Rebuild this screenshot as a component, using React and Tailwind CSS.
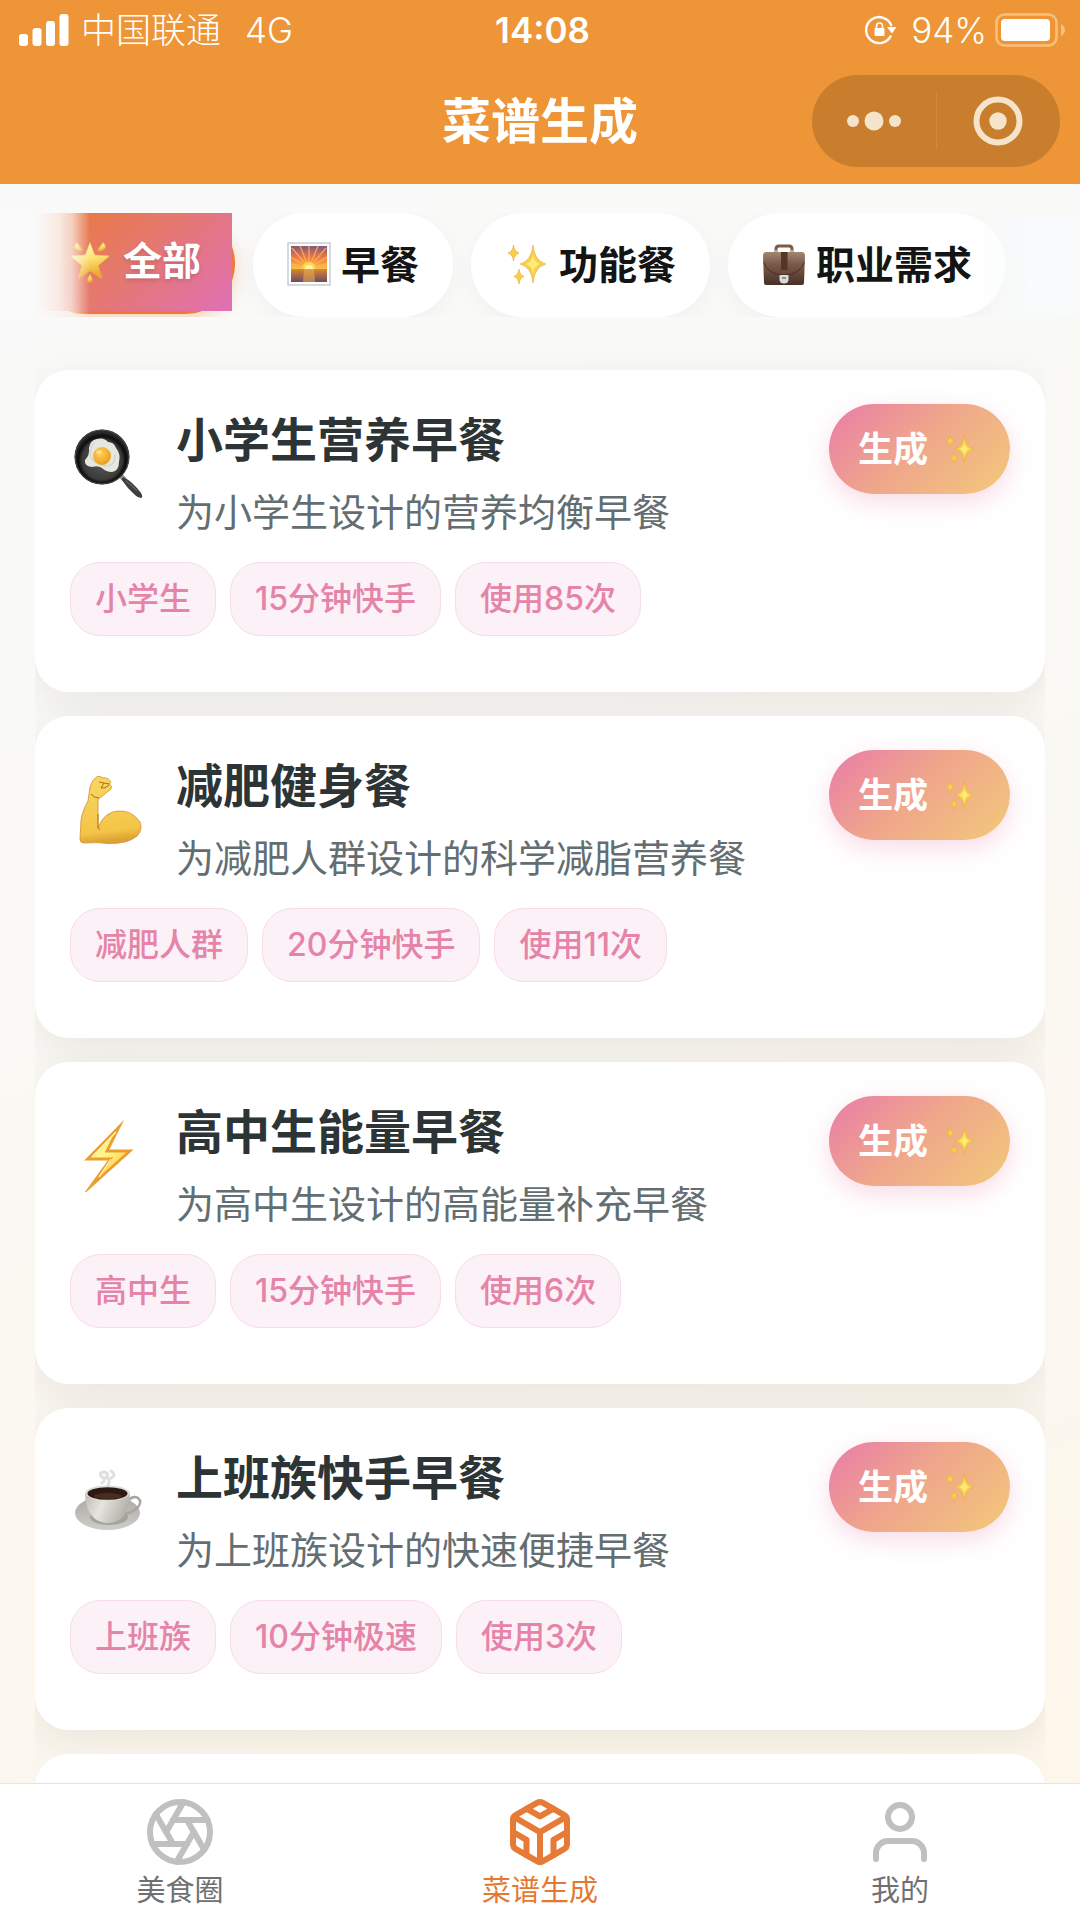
import { useState } from "react";
import clsx from "clsx";
import { FiAperture, FiCodesandbox, FiUser } from "react-icons/fi";

/* ---------- emoji drawings ---------- */

function StarIcon({ className }) {
  return (
    <svg viewBox="0 0 44 44" className={className} aria-hidden="true">
      <defs>
        <linearGradient id="star" x1="0" y1="0" x2="0.2" y2="1">
          <stop offset="0" stopColor="#fffbd0" />
          <stop offset="0.5" stopColor="#fbe578" />
          <stop offset="1" stopColor="#eda72e" />
        </linearGradient>
      </defs>
      <g fill="url(#star)" stroke="#e9a63a" strokeWidth="0.5" strokeLinejoin="round">
        <path d="M21 3 L25.6 15.3 Q26 16 27 16 L39.4 16.6 Q40.6 17 39.6 18 L30 26 Q29.4 26.6 29.6 27.4 L33 38.4 Q33 40 31.6 39.2 L21.8 32.6 Q21 32.2 20.2 32.6 L10.4 39.2 Q9 40 9 38.4 L12.4 27.4 Q12.6 26.6 12 26 L2.4 18 Q1.4 17 2.6 16.6 L15 16 Q16 16 16.4 15.3 Z" />
        <path d="M8 3.5 L13.5 11 Q11 13 9 12 L5.5 9 Q5 6 8 3.5 Z" />
        <path d="M34 3.5 L28.5 11 Q31 13 33 12 L36.5 9 Q37 6 34 3.5 Z" />
        <path d="M21 35 L23.6 41 Q23.5 43.5 21 43.5 Q18.5 43.5 18.4 41 Z" />
      </g>
    </svg>
  );
}

function SunriseIcon({ className }) {
  return (
    <svg viewBox="0 0 44 44" className={className} aria-hidden="true">
      <defs>
        <linearGradient id="sky" x1="0" y1="0" x2="0" y2="1">
          <stop offset="0" stopColor="#83567a" />
          <stop offset="0.5" stopColor="#ee7a42" />
          <stop offset="1" stopColor="#fbc23c" />
        </linearGradient>
        <linearGradient id="sea" x1="0" y1="0" x2="0" y2="1">
          <stop offset="0" stopColor="#d9872f" />
          <stop offset="1" stopColor="#6d4a64" />
        </linearGradient>
      </defs>
      <rect x="1" y="1" width="42" height="42" fill="#fff" stroke="#c5cad0" strokeWidth="1.4" />
      <rect x="4" y="4" width="36" height="23" fill="url(#sky)" />
      <g stroke="#ffb35c" strokeWidth="1.3" opacity="0.85">
        <path d="M22 26 L5 6 M22 26 L13 4 M22 26 L22 4 M22 26 L31 4 M22 26 L39 6 M22 26 L4 15 M22 26 L40 15 M22 26 L4 22 M22 26 L40 22" />
      </g>
      <path d="M15 27 a7 7 0 0 1 14 0 Z" fill="#ffd84a" />
      <path d="M18 27 a4 4 0 0 1 8 0 Z" fill="#fff7b0" />
      <rect x="4" y="27" width="36" height="13" fill="url(#sea)" />
      <path d="M17 27 H27 L28 40 H16 Z" fill="#f0b04c" opacity="0.55" />
    </svg>
  );
}

function SparklesIcon({ className }) {
  return (
    <svg viewBox="0 0 44 44" className={className} aria-hidden="true">
      <g fill="#f6cf4b" stroke="#eba53c" strokeWidth="0.6" strokeLinejoin="round">
        <path d="M28 3 Q29.500 19 41 22 Q29.500 25 28 41 Q26.500 25 15 22 Q26.500 19 28 3 Z" />
        <path d="M8.500 3 Q9.300 9.500 14 11 Q9.300 12.500 8.500 19 Q7.700 12.500 3 11 Q7.700 9.500 8.500 3 Z" />
        <path d="M14 27 Q14.700 32.800 19 34.500 Q14.700 36.200 14 42 Q13.300 36.200 9 34.500 Q13.300 32.800 14 27 Z" />
      </g>
      <path d="M28 12 Q29 20 35 22 Q29 24 28 32 Q27 24 21 22 Q27 20 28 12 Z" fill="#fdea7a" />
    </svg>
  );
}

function BriefcaseIcon({ className }) {
  return (
    <svg viewBox="0 0 44 44" className={className} aria-hidden="true">
      <defs>
        <linearGradient id="leather" x1="0" y1="0" x2="0" y2="1">
          <stop offset="0" stopColor="#a08872" />
          <stop offset="0.35" stopColor="#7b5d4a" />
          <stop offset="1" stopColor="#4a2f27" />
        </linearGradient>
      </defs>
      <path d="M14 11 V7 Q14 4 17 4 H27 Q30 4 30 7 V11" fill="none" stroke="#7d5a47" strokeWidth="3" />
      <path d="M14 8 V11 M30 8 V11" stroke="#cfd0cf" strokeWidth="1.500" />
      <path d="M4 10 H40 Q43 10 43 14 L42 41 Q42 43 40 43 H4 Q2 43 2 41 L1 14 Q1 10 4 10 Z" fill="url(#leather)" />
      <path d="M1.500 20 Q6 33 22 33 Q38 33 42.500 20" fill="none" stroke="#3e2720" strokeWidth="1" opacity="0.8" />
      <rect x="19" y="10" width="6.500" height="18" fill="#553527" />
      <path d="M17.500 33 H26.500 V38 Q26 41.500 22 41.500 Q18 41.500 17.500 38 Z" fill="#dadad8" />
      <rect x="20" y="35" width="4" height="2" fill="#8f8f8c" />
    </svg>
  );
}

function PanIcon() {
  return (
    <svg viewBox="0 0 72 72" className="size-[72px]" aria-hidden="true">
      <defs>
        <radialGradient id="pan" cx="0.5" cy="0.55" r="0.5">
          <stop offset="0" stopColor="#5b5b5b" />
          <stop offset="0.72" stopColor="#3c3c3c" />
          <stop offset="0.86" stopColor="#0c0c0c" />
          <stop offset="1" stopColor="#2b2b2b" />
        </radialGradient>
        <radialGradient id="yolk" cx="0.4" cy="0.35" r="0.7">
          <stop offset="0" stopColor="#ffd257" />
          <stop offset="1" stopColor="#ea9a1c" />
        </radialGradient>
      </defs>
      <path d="M48 47 L53 52" stroke="#9a9a9a" strokeWidth="5" />
      <path d="M51 49 Q60 53 69 65 Q71.500 69.500 69 70 Q66 70 63 67 Q55 60 49.500 51.500 Z" fill="#3f3f3f" />
      <path d="M54 53 Q60 57 65 63" stroke="#777" strokeWidth="1" fill="none" />
      <circle cx="30" cy="29" r="27.500" fill="url(#pan)" />
      <circle cx="30" cy="29" r="26.800" fill="none" stroke="#484848" strokeWidth="1" />
      <path d="M25 11 Q32 9 36 14 Q42 14 44 20 Q49 26 47 34 Q47 43 40 44 Q34 44 30 40 Q26 37 20 39 Q12 38 13 32 Q18 27 17 20 Q18 12 25 11 Z" fill="#e6e8e0" />
      <path d="M22 14 Q17 23 19 30 Q24 37 36 38 Q44 36 43 26" fill="none" stroke="#d3d6ca" strokeWidth="1.300" />
      <circle cx="30" cy="28" r="9" fill="url(#yolk)" />
      <ellipse cx="27" cy="24" rx="3" ry="2" fill="#fff0b8" opacity="0.5" />
    </svg>
  );
}

function ArmIcon() {
  return (
    <svg viewBox="0 0 72 72" className="size-[72px]" aria-hidden="true">
      <defs>
        <linearGradient id="skin" x1="0" y1="0" x2="0.1" y2="1">
          <stop offset="0" stopColor="#f9d765" />
          <stop offset="0.85" stopColor="#f3c547" />
          <stop offset="1" stopColor="#dda233" />
        </linearGradient>
      </defs>
      <path
        d="M18 13 Q20 6 25 2.500 Q28 1.500 31 4 Q34 3 37 5.500 L39 8 L37.500 10 Q40.500 12 39 15 Q34 19 28.500 23.500 Q26 24 26 27 L26 54 Q32 38 46 37 Q60 36 68 48 Q71 56 65 62 Q56 70 36 69.500 Q26 68 12 69 Q8 69 8 65 L9 46 Q10 38 16 27 Z"
        fill="url(#skin)"
        stroke="#d0902b"
        strokeWidth="0.800"
      />
      <path d="M26 40 V54 M26 54 L28 56" fill="none" stroke="#b5761d" strokeWidth="1" />
      <path d="M27 8 L32 9 L29 14 Q33 15 37 11 M32 9 L37.500 10 M19 20 Q22 24 27 24" fill="none" stroke="#a96d1c" strokeWidth="1" />
    </svg>
  );
}

function BoltIcon() {
  return (
    <svg viewBox="0 0 72 72" className="size-[72px]" aria-hidden="true">
      <defs>
        <linearGradient id="bolt" x1="0" y1="0" x2="0.6" y2="1">
          <stop offset="0" stopColor="#f7c93e" />
          <stop offset="0.5" stopColor="#fff78e" />
          <stop offset="1" stopColor="#f9bd36" />
        </linearGradient>
      </defs>
      <path
        d="M47 7 L15.500 39 H38.500 L19 66 L58 31 H35 Z"
        fill="url(#bolt)"
        stroke="#eb9d2d"
        strokeWidth="2.800"
        strokeMiterlimit="10"
      />
      <path d="M44 12 L20 37 M39 39 L27 57" stroke="#fffbc4" strokeWidth="1.300" />
    </svg>
  );
}

function CoffeeIcon() {
  return (
    <svg viewBox="0 0 72 72" className="size-[72px]" aria-hidden="true">
      <defs>
        <linearGradient id="cup" x1="0" y1="0" x2="1" y2="0.300">
          <stop offset="0" stopColor="#bdbab4" />
          <stop offset="0.450" stopColor="#e6e4df" />
          <stop offset="1" stopColor="#b5b2ab" />
        </linearGradient>
        <linearGradient id="saucer" x1="0" y1="0" x2="0" y2="1">
          <stop offset="0" stopColor="#a9a8a3" />
          <stop offset="1" stopColor="#cfcdc8" />
        </linearGradient>
      </defs>
      <ellipse cx="35.500" cy="47" rx="32.500" ry="17" fill="url(#saucer)" />
      <ellipse cx="37" cy="51" rx="19" ry="8" fill="#8f8e89" opacity="0.6" />
      <path d="M56 35 Q61 29 66 32 Q71 36 65 42 Q60 47 52 48" fill="none" stroke="#a8a6a1" strokeWidth="2.500" />
      <path d="M13 27 Q13 42 20 50 Q26 57 36 57 Q46 57 52 50 Q58 42 58 27 Z" fill="url(#cup)" />
      <ellipse cx="35.500" cy="27" rx="22.500" ry="7.500" fill="#dddbd6" />
      <ellipse cx="35.500" cy="27.500" rx="20" ry="6.300" fill="#2c1913" />
      <ellipse cx="36" cy="30" rx="14" ry="3" fill="#4a2c20" />
      <path d="M30 17 Q35 14 29 10 Q27 6 32 6 Q38 7 34 11 Q39 13 36 19 M39 5 Q45 9 39 12" fill="none" stroke="#d2d2d2" strokeWidth="3" strokeLinecap="round" opacity="0.7" />
    </svg>
  );
}

/* ---------- data ---------- */

const categories = [
  { id: "all", label: "全部", Icon: StarIcon },
  { id: "breakfast", label: "早餐", Icon: SunriseIcon },
  { id: "function", label: "功能餐", Icon: SparklesIcon },
  { id: "job", label: "职业需求", Icon: BriefcaseIcon },
];

const recipes = [
  { title: "小学生营养早餐", desc: "为小学生设计的营养均衡早餐", tags: ["小学生", "15分钟快手", "使用85次"], Icon: PanIcon },
  { title: "减肥健身餐", desc: "为减肥人群设计的科学减脂营养餐", tags: ["减肥人群", "20分钟快手", "使用11次"], Icon: ArmIcon },
  { title: "高中生能量早餐", desc: "为高中生设计的高能量补充早餐", tags: ["高中生", "15分钟快手", "使用6次"], Icon: BoltIcon },
  { title: "上班族快手早餐", desc: "为上班族设计的快速便捷早餐", tags: ["上班族", "10分钟极速", "使用3次"], Icon: CoffeeIcon },
];

const navItems = [
  { label: "美食圈", Icon: FiAperture },
  { label: "菜谱生成", Icon: FiCodesandbox, active: true },
  { label: "我的", Icon: FiUser },
];

/* ---------- parts ---------- */

function StatusBar() {
  return (
    <div className="grid h-[60px] grid-cols-3 items-center pr-[14px] pl-[19px] text-[35px] leading-none">
      <div className="flex items-center">
        <svg viewBox="0 0 50 32" className="mr-3 h-8 w-[50px]" fill="#fff" aria-hidden="true">
          <rect x="0" y="20" width="9" height="12" rx="3" />
          <rect x="13.500" y="14" width="9" height="18" rx="3" />
          <rect x="27" y="7" width="9" height="25" rx="3" />
          <rect x="40.500" y="0" width="9" height="32" rx="3" />
        </svg>
        <span className="mr-6 font-light">中国联通</span>
        <span className="font-light">4G</span>
      </div>
      <div className="text-center font-semibold">14:08</div>
      <div className="flex items-center justify-end font-light">
        <svg viewBox="0 0 32 30" className="mr-[14px] h-[30px] w-8" aria-hidden="true">
          <path d="M26 20.500 A13 13 0 1 1 26.500 11" fill="none" stroke="#fff" strokeWidth="2.400" />
          <path d="M22 12 H31.500 L27 18.500 Z" fill="#fff" />
          <rect x="9.500" y="13" width="10" height="8" rx="1" fill="#fff" />
          <path d="M11.500 13 V11 a3 3 0 0 1 6 0 V13" fill="none" stroke="#fff" strokeWidth="1.600" />
        </svg>
        <span className="mr-2">94%</span>
        <svg viewBox="0 0 71 34" className="h-[34px] w-[71px]" aria-hidden="true">
          <rect x="1.500" y="1.500" width="60" height="31" rx="8" fill="none" stroke="#f9c079" strokeWidth="2.600" />
          <rect x="6" y="6" width="49" height="22" rx="4" fill="#fff" />
          <path d="M66 11 Q70 13 70 17 Q70 21 66 23 Z" fill="#f9c079" />
        </svg>
      </div>
    </div>
  );
}

function TitleBar() {
  return (
    <div className="grid grid-cols-[1fr_auto_1fr] items-center px-5 pt-[15px] pb-[17px]">
      <h1 className="col-start-2 text-[49px] leading-none font-semibold">菜谱生成</h1>
      <div className="flex h-[92px] w-[248px] items-center justify-self-end rounded-full bg-[#c87e2c]">
        <button type="button" aria-label="更多" className="flex h-full flex-1 items-center justify-center">
          <svg viewBox="0 0 56 20" className="h-5 w-14" fill="#f5e3cb">
            <circle cx="7" cy="10" r="6" />
            <circle cx="28" cy="10" r="9.500" />
            <circle cx="49" cy="10" r="6" />
          </svg>
        </button>
        <span className="h-14 w-px bg-[#d28d3c]" />
        <button type="button" aria-label="关闭" className="flex h-full flex-1 items-center justify-center">
          <svg viewBox="0 0 50 50" className="size-[50px]">
            <circle cx="25" cy="25" r="21.500" fill="none" stroke="#f5e3cb" strokeWidth="6" />
            <circle cx="25" cy="25" r="8.700" fill="#f5e3cb" />
          </svg>
        </button>
      </div>
    </div>
  );
}

function CategoryTabs({ active, onSelect }) {
  return (
    <div className="relative mt-[29px] h-[104px] shrink-0 overflow-hidden">
      <div className="flex items-start gap-[18px] overflow-x-auto pl-[35px] [scrollbar-width:none]">
        {categories.map(({ id, label, Icon }) => {
          const selected = id === active;
          return (
            <button
              key={id}
              type="button"
              aria-pressed={selected}
              onClick={() => onSelect(id)}
              className={clsx(
                "relative flex shrink-0 items-center gap-[10px] rounded-full px-[34px] text-[39px] leading-none font-semibold",
                selected
                  ? "h-[101px] bg-[#ee7a3a] pb-[6px] text-white shadow-[0_6px_18px_rgba(238,140,60,0.35)]"
                  : "h-[104px] bg-white pb-[2px] text-[#141414] shadow-[0_6px_24px_rgba(0,0,0,0.04)]"
              )}
            >
              {selected && (
                <span className="absolute top-0 right-[3px] bottom-[3px] left-0 bg-linear-[135deg,#ea7a36,#e57870_50%,#e070b4]" />
              )}
              <Icon className="relative size-11" />
              <span className={clsx("relative", selected && "[text-shadow:0_2px_4px_rgba(0,0,0,0.15)]")}>{label}</span>
            </button>
          );
        })}
        <button type="button" aria-label="更多分类" className="h-[104px] w-[200px] shrink-0 rounded-full bg-white" />
      </div>

      {/* edge fades */}
      <span className="pointer-events-none absolute inset-y-0 left-0 w-[90px] bg-linear-[90deg,#fafafa_40%,#faf5f1e6_66%,#faf5f1b3_80%,#faf5f100]" />
      <span className="pointer-events-none absolute inset-y-0 right-0 w-28 bg-linear-[90deg,#f8fafc00,#f8fafccc_50%,#f8fafc]" />
    </div>
  );
}

function RecipeCard({ title, desc, tags, Icon }) {
  return (
    <article className="rounded-[34px] bg-white px-[35px] pt-[34px] pb-14 shadow-[0_12px_44px_rgba(40,30,10,0.08)]">
      <div className="flex items-start">
        <div className="mt-6 mr-[30px] flex w-[76px] justify-center">
          <Icon />
        </div>
        <div className="min-w-0 flex-1">
          <h2 className="text-[47px] leading-[72px] font-semibold text-[#2d3436]">{title}</h2>
          <p className="text-[38px] leading-[72px] text-[#636e72]">{desc}</p>
        </div>
        <button
          type="button"
          className="flex h-[90px] items-center gap-4 rounded-full bg-linear-[135deg,#e97ca8,#efa58c_45%,#f3c97a] pr-[34px] pl-[29px] text-[35px] leading-none font-semibold text-white shadow-[0_8px_24px_rgba(232,125,168,0.28)]"
        >
          生成
          <SparklesIcon className="size-8" />
        </button>
      </div>
      <ul className="mt-[14px] flex flex-wrap gap-[14px]">
        {tags.map((tag) => (
          <li
            key={tag}
            className="rounded-[30px] border border-[#f8dce7] bg-[#fbf1f6] px-6 text-[32px] leading-[72px] font-medium text-[#e583a8]"
          >
            {tag}
          </li>
        ))}
      </ul>
    </article>
  );
}

function BottomNav() {
  return (
    <nav className="grid h-[138px] shrink-0 grid-cols-3 border-t border-[#e6e4e3] bg-white pt-3">
      {navItems.map(({ label, Icon, active }) => (
        <a
          key={label}
          href="#"
          aria-current={active ? "page" : undefined}
          className={clsx("flex flex-col items-center text-[29px] leading-[46px]", active ? "text-[#e47a32]" : "text-[#707070]")}
        >
          <Icon className={clsx("size-[72px]", active ? "text-[#e67a36]" : "text-[#c0c0c0]")} />
          {label}
        </a>
      ))}
    </nav>
  );
}

export default function App() {
  const [category, setCategory] = useState("all");

  return (
    <div className="flex h-screen flex-col overflow-hidden bg-linear-[160deg,#f9fafb,#faf9f6_35%,#fdf6ea] font-['Inter','Noto_Sans_CJK_SC',sans-serif]">
      <header className="shrink-0 bg-[#ed9537] text-white">
        <StatusBar />
        <TitleBar />
      </header>

      <CategoryTabs active={category} onSelect={setCategory} />

      <main className="mx-[35px] mt-7 flex min-h-0 flex-1 flex-col gap-6 overflow-y-auto pt-[25px] [scrollbar-width:none]">
        {recipes.map((recipe) => (
          <RecipeCard key={recipe.title} {...recipe} />
        ))}
        <div className="h-[322px] shrink-0 rounded-[34px] bg-white" />
      </main>

      <BottomNav />
    </div>
  );
}
